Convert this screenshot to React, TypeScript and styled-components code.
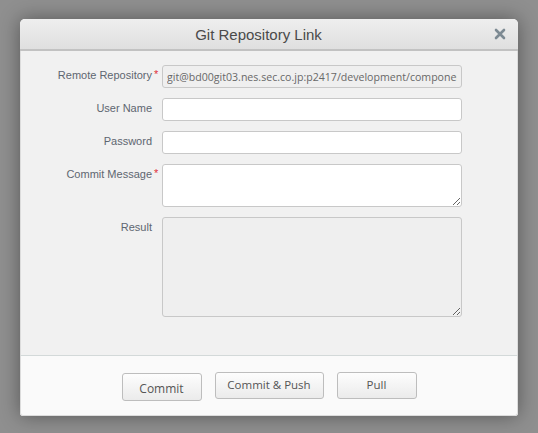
import React from "react";
import styled, { createGlobalStyle } from "styled-components";

const Global = createGlobalStyle`
  html, body { margin: 0; padding: 0; background: #8f8f8f; }
  body { font-family: "Liberation Sans", Arial, sans-serif; }
  * { box-sizing: border-box; }
`;

const Page = styled.div`
  width: 538px;
  height: 433px;
  padding: 19px 20px;
  background: #8f8f8f;
`;

const Dialog = styled.div`
  width: 498px;
  display: flex;
  flex-direction: column;
  border-radius: 5px 5px 3px 3px;
  box-shadow: 0 0 20px rgba(0, 0, 0, 0.4);
  background: #fafafa;
  overflow: hidden;
`;

const TitleBar = styled.div`
  position: relative;
  height: 32px;
  display: flex;
  align-items: center;
  justify-content: center;
  padding-right: 21px;
  background: linear-gradient(#eeeeee, #dfdfdf);
  border-bottom: 2px solid #c2c2c2;
`;

const Title = styled.div`
  font-size: 15px;
  color: #4a4a4a;
  padding-top: 1px;
`;

const Close = styled.button`
  position: absolute;
  right: 11px;
  top: 8px;
  width: 14px;
  height: 14px;
  padding: 0;
  border: none;
  background: none;
  display: flex;
  align-items: center;
  justify-content: center;
`;

const Body = styled.div`
  background: #f1f1f1;
  border-left: 1px solid #dcdcdc;
  border-right: 1px solid #dcdcdc;
  padding: 14px 0 38px;
  display: grid;
  grid-template-columns: 141px 300px;
  row-gap: 10px;
  border-bottom: 1px solid #d3d9d9;
`;

const Label = styled.label`
  position: relative;
  justify-self: end;
  margin-right: 10px;
  padding-top: 3px;
  font-size: 11px;
  line-height: 14px;
  color: #5e6670;
`;

const Req = styled.span`
  position: absolute;
  left: 100%;
  top: 2px;
  margin-left: 2px;
  color: #e0303a;
  font-size: 11px;
`;

const fieldFont = `"Open Sans", "DejaVu Sans", sans-serif`;

const TextInput = styled.input<{ $disabled?: boolean }>`
  width: 300px;
  height: 23px;
  border: 1px solid #c8c8c8;
  border-radius: 3px;
  background: ${(p) => (p.$disabled ? "#efefef" : "#ffffff")};
  color: #686868;
  font-family: ${fieldFont};
  font-size: 10.6px;
  padding: 0 4px;
  outline: none;
`;

const Area = styled.textarea<{ $h: number; $disabled?: boolean }>`
  width: 300px;
  height: ${(p) => p.$h}px;
  border: 1px solid #c8c8c8;
  border-radius: 3px;
  background: ${(p) => (p.$disabled ? "#efefef" : "#ffffff")};
  font-family: ${fieldFont};
  font-size: 11px;
  outline: none;
  margin: 0;
  display: block;
`;

const Footer = styled.div`
  height: 60px;
  display: flex;
  align-items: center;
  justify-content: center;
  gap: 13px;
  background: #fafafa;
  border: 1px solid #dcdcdc;
  border-top: none;
  border-radius: 0 0 3px 3px;
`;

const Btn = styled.button<{ $w: number; $pressed?: boolean }>`
  width: ${(p) => p.$w}px;
  height: ${(p) => (p.$pressed ? 28 : 27)}px;
  margin-top: ${(p) => (p.$pressed ? 3 : 0)}px;
  border: 1px solid #bdbdbd;
  border-radius: 3px;
  background: linear-gradient(#fdfdfd, #ebebeb);
  color: #555;
  font-family: ${fieldFont};
  font-size: ${(p) => (p.$pressed ? 12 : 11.5)}px;
  padding: ${(p) => (p.$pressed ? "3px 0 0" : "0 0 2px")};
`;

export default function App() {
  return (
    <>
      <Global />
      <Page>
        <Dialog>
          <TitleBar>
            <Title>Git Repository Link</Title>
            <Close aria-label="close">
              <svg width="12" height="12" viewBox="0 0 12 12">
                <path d="M2 2 L10 10 M10 2 L2 10" stroke="#7d8a93" strokeWidth="2.6" strokeLinecap="round" />
              </svg>
            </Close>
          </TitleBar>
          <Body>
            <Label>
              Remote Repository<Req>*</Req>
            </Label>
            <TextInput
              $disabled
              readOnly
              value="git@bd00git03.nes.sec.co.jp:p2417/development/components.git"
            />
            <Label>User Name</Label>
            <TextInput />
            <Label>Password</Label>
            <TextInput type="password" />
            <Label>
              Commit Message<Req>*</Req>
            </Label>
            <Area $h={43} />
            <Label>Result</Label>
            <Area $h={100} $disabled readOnly />
          </Body>
          <Footer>
            <Btn $w={80} $pressed>Commit</Btn>
            <Btn $w={109}>Commit &amp; Push</Btn>
            <Btn $w={80}>Pull</Btn>
          </Footer>
        </Dialog>
      </Page>
    </>
  );
}
